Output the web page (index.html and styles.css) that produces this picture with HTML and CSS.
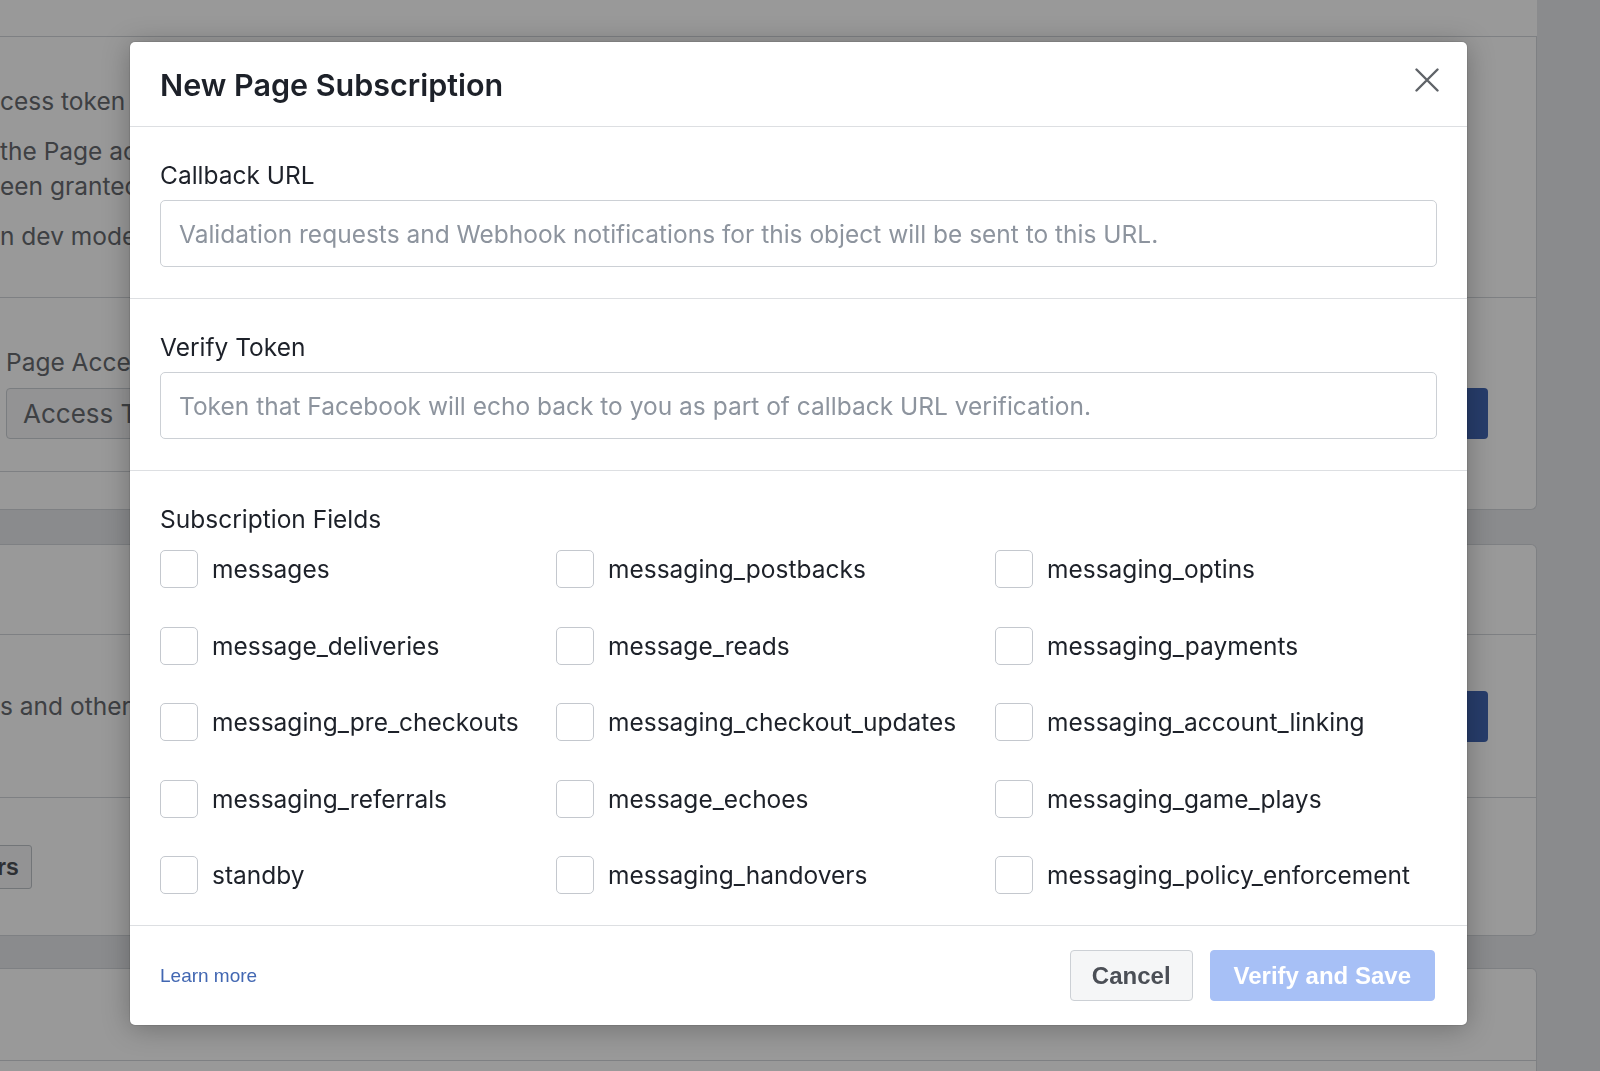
FILE: index.html
```html
<!DOCTYPE html>
<html lang="en">
<head>
<meta charset="utf-8">
<title>New Page Subscription</title>
<link rel="stylesheet" href="styles.css">
</head>
<body>
<div class="page">
  <div class="topbar"></div>

  <section class="card card-first">
    <div class="notes">
      <p class="note">cess token</p>
      <p class="note">the Page ac<br>een granted</p>
      <p class="note">n dev mode</p>
    </div>
    <div class="token">
      <p class="note token-label">Page Acce</p>
      <div class="token-line">
        <div class="token-input">Access T</div>
        <span class="blue-btn"></span>
      </div>
    </div>
  </section>

  <section class="card card-second">
    <div class="row row-a"></div>
    <div class="row row-b">
      <p class="note">s and other</p>
      <span class="blue-btn"></span>
    </div>
    <div class="row row-c">
      <span class="grey-btn">rs</span>
    </div>
  </section>

  <section class="card card-third">
    <div class="row row-d"></div>
  </section>
</div>

<div class="overlay"></div>

<div class="modal" role="dialog" aria-labelledby="modal-title">
  <header class="modal-head">
    <h2 class="modal-title" id="modal-title">New Page Subscription</h2>
    <svg class="close" viewBox="0 0 24 24" width="24" height="24" aria-label="Close">
      <path d="M1.5 1.5L22.5 22.5M22.5 1.5L1.5 22.5" stroke="#5f6368" stroke-width="2.4" stroke-linecap="round" fill="none"/>
    </svg>
  </header>

  <div class="section">
    <label class="label" for="cb-url">Callback URL</label>
    <input class="input" id="cb-url" type="text" placeholder="Validation requests and Webhook notifications for this object will be sent to this URL.">
  </div>

  <div class="section">
    <label class="label" for="verify-token">Verify Token</label>
    <input class="input" id="verify-token" type="text" placeholder="Token that Facebook will echo back to you as part of callback URL verification.">
  </div>

  <div class="section fields-section">
    <div class="label">Subscription Fields</div>
    <div class="fields">
      <label class="field"><input type="checkbox" class="box">messages</label>
      <label class="field"><input type="checkbox" class="box">messaging_postbacks</label>
      <label class="field"><input type="checkbox" class="box">messaging_optins</label>
      <label class="field"><input type="checkbox" class="box">message_deliveries</label>
      <label class="field"><input type="checkbox" class="box">message_reads</label>
      <label class="field"><input type="checkbox" class="box">messaging_payments</label>
      <label class="field"><input type="checkbox" class="box">messaging_pre_checkouts</label>
      <label class="field"><input type="checkbox" class="box">messaging_checkout_updates</label>
      <label class="field"><input type="checkbox" class="box">messaging_account_linking</label>
      <label class="field"><input type="checkbox" class="box">messaging_referrals</label>
      <label class="field"><input type="checkbox" class="box">message_echoes</label>
      <label class="field"><input type="checkbox" class="box">messaging_game_plays</label>
      <label class="field"><input type="checkbox" class="box">standby</label>
      <label class="field"><input type="checkbox" class="box">messaging_handovers</label>
      <label class="field"><input type="checkbox" class="box">messaging_policy_enforcement</label>
    </div>
  </div>

  <footer class="modal-foot">
    <a class="learn" href="#">Learn more</a>
    <div class="actions">
      <button class="btn btn-cancel" type="button">Cancel</button>
      <button class="btn btn-primary" type="button" disabled>Verify and Save</button>
    </div>
  </footer>
</div>
</body>
</html>
```

FILE: styles.css
```css
* { box-sizing: border-box; }

html, body {
  margin: 0;
  padding: 0;
}

body {
  position: relative;
  height: 1071px;
  overflow: hidden;
  background: #e6e8eb;
  font-family: Inter, "Noto Sans", sans-serif;
  color: #1d2129;
}

/* ---------- page behind the dialog ---------- */
.page {
  width: 1537px;
}

.topbar {
  height: 37px;
  background: #fff;
  border-bottom: 1px solid #d3d6db;
}

.card {
  background: #fff;
  border: 1px solid #d3d6db;
  border-left: 0;
  border-radius: 0 6px 6px 0;
  overflow: hidden;
}

.card-first {
  border-top: 0;
  border-radius: 0 0 6px 0;
  height: 473px;
}

.card-second {
  margin-top: 34px;
  height: 392px;
}

.card-third {
  margin-top: 32px;
  height: 200px;
}

.note {
  margin: 0;
  font-size: 24.5px;
  line-height: 35px;
  color: #686b71;
  white-space: nowrap;
}

.notes {
  padding: 47px 0 45px;
  border-bottom: 1px solid #d3d6db;
  height: 261px;
}

.notes .note + .note {
  margin-top: 15px;
}

.token {
  padding: 49px 48px 0 6px;
  height: 174px;
  margin-right: 200px;
  border-bottom: 1px solid #d3d6db;
}

.token-label {
  line-height: 30px;
  margin-bottom: 11px;
}

.token-line {
  display: flex;
  gap: 12px;
}

.token-input {
  flex: 1;
  height: 51px;
  padding: 0 16px;
  display: flex;
  align-items: center;
  background: #f5f6f7;
  border: 1px solid #ccd0d5;
  border-radius: 4px;
  font-size: 26px;
  color: #686b71;
}

.blue-btn {
  flex: none;
  width: 160px;
  height: 51px;
  background: #4267b2;
  border-radius: 4px;
}

.token .blue-btn {
  margin-right: -200px;
}

.row {
  border-bottom: 1px solid #d3d6db;
}

.row-a { height: 90px; }

.row-b {
  height: 163px;
  display: flex;
  align-items: flex-start;
  justify-content: space-between;
  padding: 54px 48px 0 0;
}

.row-b .blue-btn { margin-top: 2px; }

.row-c {
  height: 139px;
  border-bottom: 0;
  padding-top: 47px;
}

.grey-btn {
  display: inline-flex;
  align-items: center;
  height: 44px;
  padding: 0 12px 0 0;
  margin-left: -4px;
  background: #f5f6f7;
  border: 1px solid #bec3c9;
  border-radius: 3px;
  font-family: "Liberation Sans", Arial, sans-serif;
  font-weight: 700;
  font-size: 23px;
  color: #4b4f56;
}

.row-d { height: 92px; }

.overlay {
  position: fixed;
  inset: 0;
  background: rgba(0, 0, 0, 0.4);
  z-index: 1;
}

/* ---------- dialog ---------- */
.modal {
  position: absolute;
  top: 42px;
  left: 130px;
  width: 1337px;
  background: #fff;
  border-radius: 5px;
  box-shadow: 0 3px 28px rgba(0, 0, 0, 0.28), 0 0 0 1px rgba(0, 0, 0, 0.08);
  z-index: 2;
}

.modal-head {
  height: 85px;
  padding: 0 28px 0 30px;
  display: flex;
  align-items: center;
  justify-content: space-between;
  border-bottom: 1px solid #dddfe2;
}

.modal-title {
  margin: 0;
  font-size: 30.5px;
  font-weight: 600;
  color: #1d2129;
}

.close {
  flex: none;
  margin-bottom: 8px;
}

.section {
  padding: 33px 30px 31px;
  border-bottom: 1px solid #dddfe2;
}

.label {
  display: block;
  font-size: 24.5px;
  line-height: 30px;
  margin-bottom: 10px;
  color: #1d2129;
}

.input {
  display: block;
  width: 100%;
  height: 67px;
  margin: 0;
  padding: 0 18px;
  border: 1px solid #ccd0d5;
  border-radius: 5px;
  background: #fff;
  font-family: Inter, "Noto Sans", sans-serif;
  font-size: 24.5px;
  color: #1d2129;
  outline: none;
}

.input::placeholder {
  color: #8d949e;
}

.fields-section {
  padding: 33px 30px 31px;
}

.fields-section .label {
  margin-bottom: 16px;
}

.fields {
  display: grid;
  grid-template-columns: 396px 439px 1fr;
  row-gap: 38.5px;
}

.field {
  display: flex;
  align-items: center;
  gap: 14px;
  height: 38px;
  font-size: 24.5px;
  color: #1d2129;
}

.box {
  appearance: none;
  -webkit-appearance: none;
  flex: none;
  width: 38px;
  height: 38px;
  margin: 0;
  background: #fff;
  border: 1px solid #c4c8ce;
  border-radius: 5px;
}

.modal-foot {
  padding: 24px 32px 24px 30px;
  display: flex;
  align-items: center;
  justify-content: space-between;
}

.learn {
  font-family: "Liberation Sans", Arial, sans-serif;
  font-size: 19px;
  color: #4267b2;
  text-decoration: none;
}

.actions {
  display: flex;
  gap: 17px;
}

.btn {
  height: 51px;
  margin: 0;
  border-radius: 4px;
  font-family: "Liberation Sans", Arial, sans-serif;
  font-weight: 700;
  font-size: 24px;
  cursor: pointer;
}

.btn-cancel {
  padding: 0 21px;
  background: #f5f6f7;
  border: 1px solid #ccd0d5;
  color: #4b4f56;
}

.btn-primary {
  padding: 0 23px;
  background: #a7c0f6;
  border: 1px solid #a7c0f6;
  color: #fff;
}
```
